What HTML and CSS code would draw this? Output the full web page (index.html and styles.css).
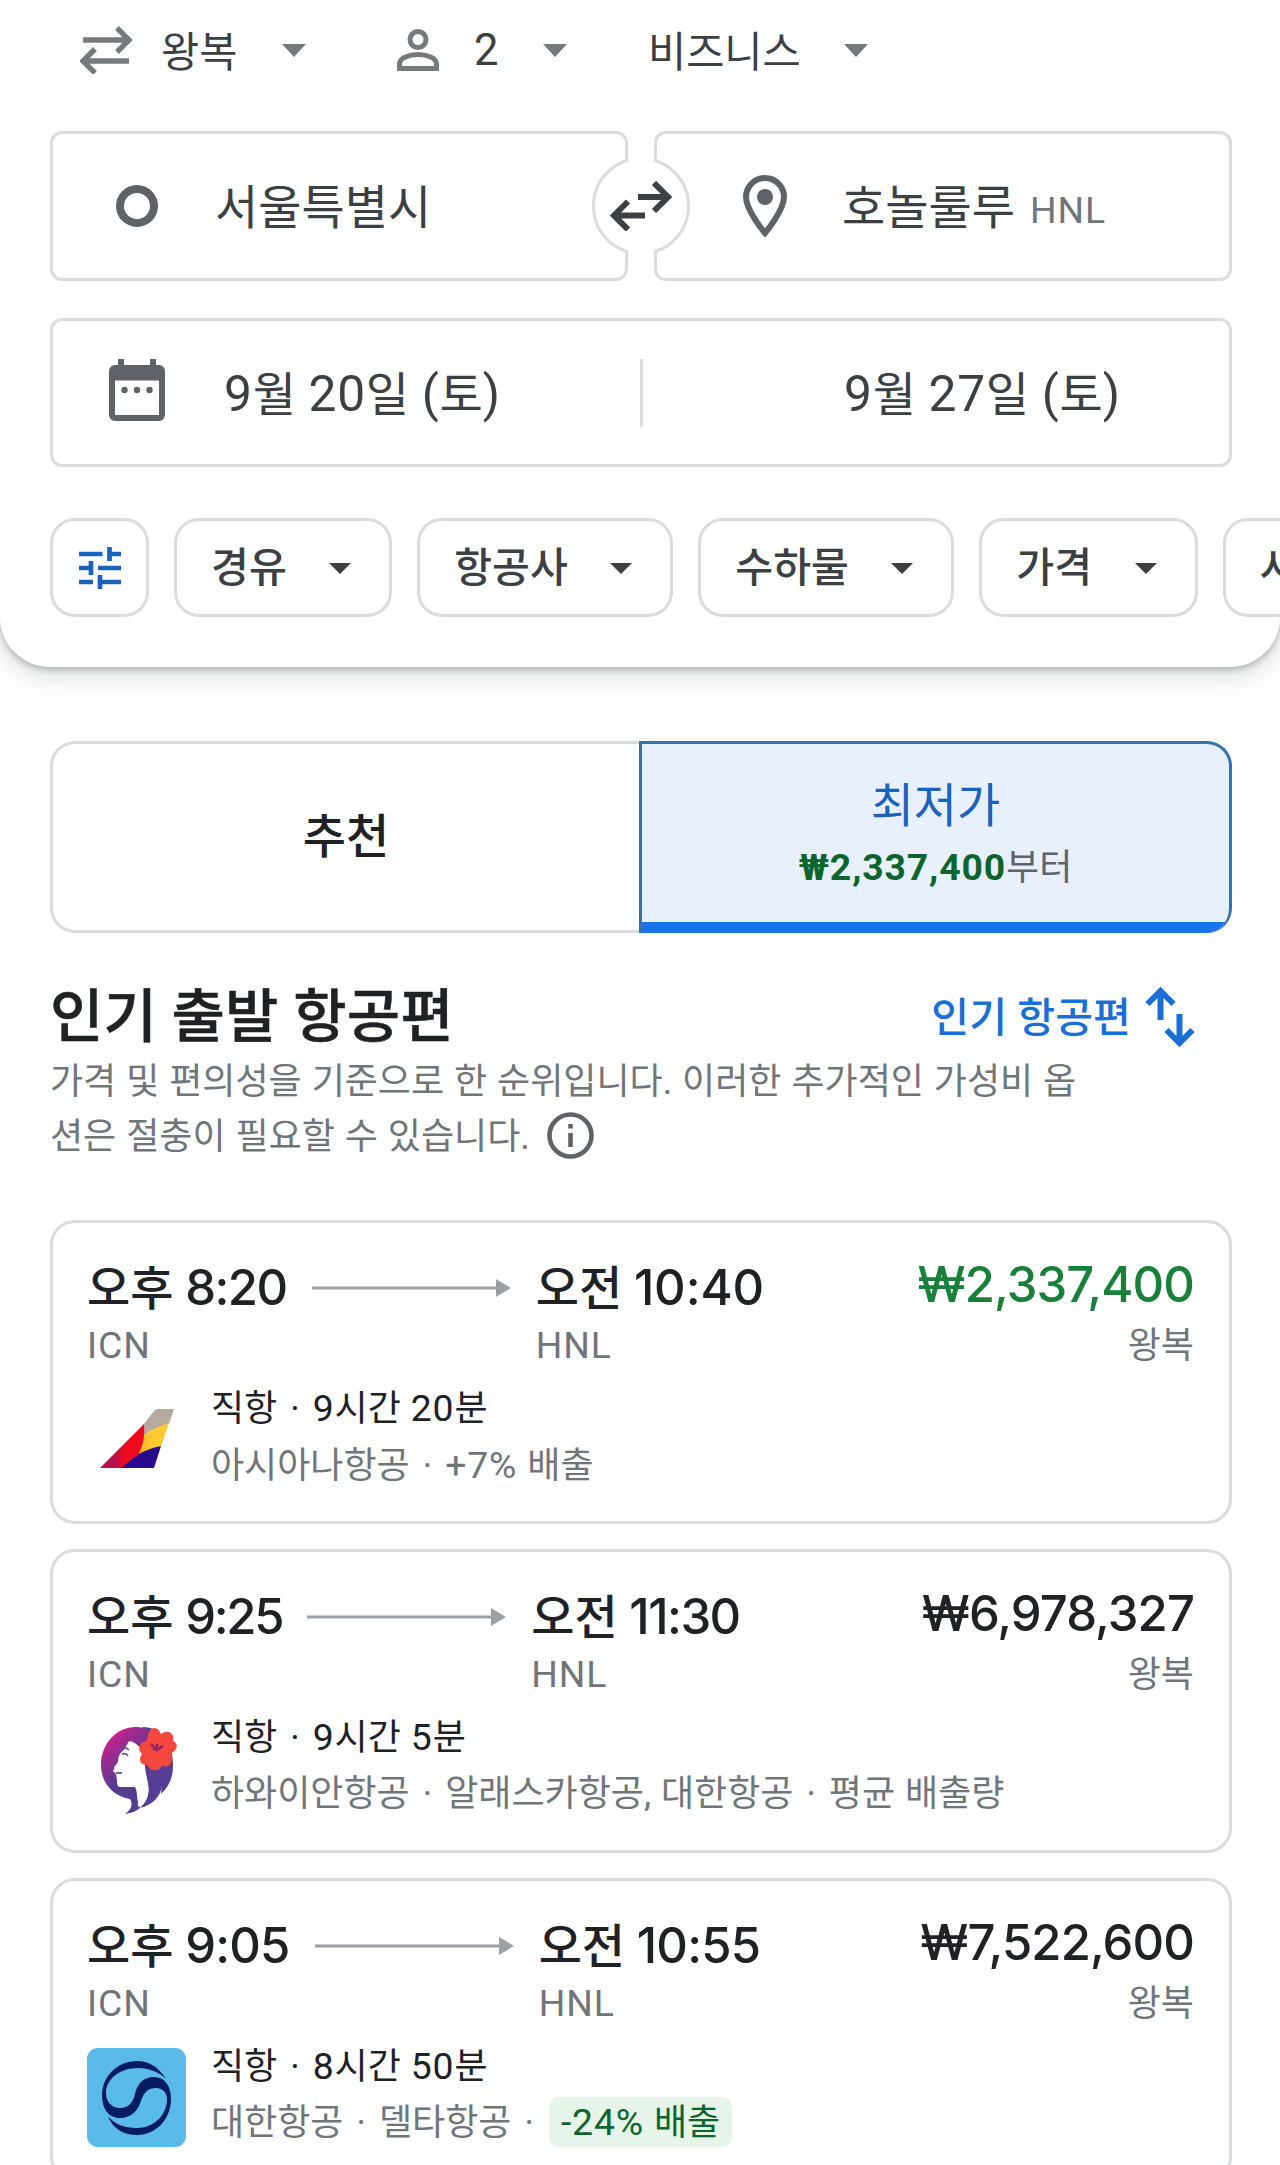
FILE: index.html
```html
<!DOCTYPE html>
<html lang="ko">
<head>
<meta charset="utf-8">
<title>항공편 검색</title>
<link rel="stylesheet" href="styles.css">
</head>
<body>
<header class="search">
  <div class="options">
    <div class="option option-trip">
      <svg class="i-trip" width="52" height="48" viewBox="0 0 52 48" fill="none" stroke="currentColor" stroke-width="5.4"><path d="M3 14H48M37 2l12 12-12 12M49 35H4M15 23L3 35l12 12"/></svg>
      <span>왕복</span><i class="caret"></i>
    </div>
    <div class="option option-people">
      <svg class="i-person" width="42" height="42" viewBox="0 0 42 42" fill="none" stroke="currentColor" stroke-width="5"><circle cx="21" cy="10.5" r="8"/><path d="M2.5 39.5V35C2.5 29 12 25.500 21 25.500S39.500 29 39.500 35v4.500z"/></svg>
      <span class="people">2</span><i class="caret"></i>
    </div>
    <div class="option option-class"><span>비즈니스</span><i class="caret"></i></div>
  </div>

  <div class="route">
    <div class="field">
      <svg class="i-origin" width="42" height="42" viewBox="0 0 42 42" fill="none" stroke="currentColor" stroke-width="8"><circle cx="21" cy="21" r="17"/></svg>
      <span>서울특별시</span>
    </div>
    <div class="field field-to">
      <svg class="i-pin" width="44" height="62" viewBox="0 0 44 62"><path d="M22 3C11.500 3 3 11.500 3 22c0 13.500 19 36 19 36s19-22.500 19-36C41 11.500 32.500 3 22 3z" fill="none" stroke="currentColor" stroke-width="6"/><circle cx="22" cy="22" r="8" fill="currentColor"/></svg>
      <span>호놀룰루</span><span class="code">HNL</span>
    </div>
    <div class="swap">
      <svg width="62" height="50" viewBox="0 0 62 50" fill="none" stroke="currentColor" stroke-width="6"><path d="M28 16H58M44 2l14 14-14 14M35 34.500H4M18 20.500l-14 14 14 14"/></svg>
    </div>
  </div>

  <div class="dates">
    <div class="date">
      <svg width="56" height="62" viewBox="0 0 56 62" fill="currentColor"><path fill-rule="evenodd" d="M9 0h6v6h26V0h6v6h3a6 6 0 0 1 6 6v44a6 6 0 0 1-6 6H6a6 6 0 0 1-6-6V12a6 6 0 0 1 6-6h3zM6 21.500V56h44V21.500z"/><circle cx="15.500" cy="31" r="3.200"/><circle cx="28" cy="31" r="3.200"/><circle cx="40.500" cy="31" r="3.200"/></svg>
      <span><b>9</b>월 <b>20</b>일 <b>(</b>토<b>)</b></span>
    </div>
    <div class="date date-back"><span><b>9</b>월 <b>27</b>일 <b>(</b>토<b>)</b></span></div>
  </div>

  <div class="chips">
    <div class="chip chip-tune"><svg width="42" height="42" viewBox="0 0 42 42" fill="none" stroke="currentColor" stroke-width="4.700"><path d="M0 7H23.500M30.500 0V14M30.500 7H42M0 21H12M12 14V28M19 21H42M0 35H14M21 28V42M21 35H42"/></svg></div>
    <div class="chip"><span>경유</span><i class="caret"></i></div>
    <div class="chip"><span>항공사</span><i class="caret"></i></div>
    <div class="chip"><span>수하물</span><i class="caret"></i></div>
    <div class="chip"><span>가격</span><i class="caret"></i></div>
    <div class="chip"><span>시간</span><i class="caret"></i></div>
  </div>
</header>

<main>
  <div class="tabs">
    <div class="tab">추천</div>
    <div class="tab tab-on"><span>최저가</span><small><strong>₩2,337,400</strong>부터</small></div>
  </div>

  <div class="heading">
    <h1>인기 출발 항공편</h1>
    <div class="sort"><span>인기 항공편</span>
      <svg width="50" height="62" viewBox="0 0 50 62" fill="none" stroke="currentColor" stroke-width="6"><path d="M15.500 34V5M2.500 18l13-13 13 13M34.500 28V57M21.500 44l13 13 13-13"/></svg>
    </div>
  </div>
  <p class="note">가격 및 편의성을 기준으로 한 순위입니다. 이러한 추가적인 가성비 옵<br>션은 절충이 필요할 수 있습니다.<svg width="47" height="47" viewBox="0 0 47 47"><circle cx="23.500" cy="23.500" r="21" fill="none" stroke="currentColor" stroke-width="4.600"/><path d="M21.200 21h4.600v14h-4.600zM21.200 12h4.600v4.600h-4.600z" fill="currentColor"/></svg></p>

  <section class="cards">
    <article class="card">
      <div class="times">
        <div class="stop"><span class="time">오후 <b>8:20</b></span><span class="code">ICN</span></div>
        <svg class="arrow" width="199" height="18" viewBox="0 0 199 18"><path d="M0 7.500H184V0l15 9-15 9v-7.500H0z"/></svg>
        <div class="stop"><span class="time">오전 <b class="wide">10:40</b></span><span class="code">HNL</span></div>
        <div class="fare"><span class="price low">₩2,337,400</span><span class="kind">왕복</span></div>
      </div>
      <div class="detail">
        <svg class="logo" width="99" height="99" viewBox="0 0 99 99">
          <defs><linearGradient id="az" x1="0" y1="0" x2="1" y2="0"><stop offset=".35" stop-color="#b5124d"/><stop offset=".55" stop-color="#ee0a1c"/></linearGradient>
          <linearGradient id="ay" x1="0" y1="0" x2="1" y2="0"><stop offset="0" stop-color="#f7a823"/><stop offset=".5" stop-color="#fecb2f"/></linearGradient></defs>
          <path fill="#b5aa9e" d="M70 19h17l-5 15C71 36 63 41 56 46V35L67 21z"/>
          <path fill="url(#ay)" d="M56 46C63 41 71 36 82 33l-8 23C63 58 55 63 48 69z"/>
          <path fill="#2a0a8c" d="M74 56l-7 22H32C44 67 58 59 74 56z"/>
          <path fill="url(#az)" d="M13 78L57 34c1 12-1 22-6 31-7 4-12 9-16 13z"/>
        </svg>
        <div class="lines"><span class="dark">직항 <i>·</i> <b>9</b>시간 <b>20</b>분</span><span>아시아나항공 <i>·</i> <b>+7%</b> 배출</span></div>
      </div>
    </article>

    <article class="card">
      <div class="times">
        <div class="stop"><span class="time">오후 <b class="tight">9:25</b></span><span class="code">ICN</span></div>
        <svg class="arrow" width="199" height="18" viewBox="0 0 199 18"><path d="M0 7.500H184V0l15 9-15 9v-7.500H0z"/></svg>
        <div class="stop"><span class="time">오전 <b>11:30</b></span><span class="code">HNL</span></div>
        <div class="fare"><span class="price">₩6,978,327</span><span class="kind">왕복</span></div>
      </div>
      <div class="detail">
        <svg class="logo" width="99" height="99" viewBox="0 0 99 99">
          <defs><linearGradient id="hw" x1=".1" y1=".1" x2=".45" y2=".75"><stop offset="0" stop-color="#dc1f8d"/><stop offset=".3" stop-color="#a12a8e"/><stop offset=".8" stop-color="#553c94"/></linearGradient></defs>
          <path fill="#553c94" d="M56 8c16 0 30 15 30 37 0 12-2 20-12 30l1-9c-1 12-10 20-22 23 8-7 10-15 7-27L56 41 42 22z"/>
          <path fill="url(#hw)" d="M64 13C58 9 54 8 49 8 29 8 14 25 14 46c0 17 11 31 29 34 3 5 2 10-5 15 7-1 12-3 15-6-3-8-3-14-4-21H33c-3 0-3-4-3-7l-1-6-3-3 5-9c0-6 2-9 6-12l5-9 6 2c4 1 6 5 8 9z"/>
          <path fill="#fff" d="M43 22c-1 5-4 7-6 9-4 4-5 7-5 11l-5 6 3 3-1 3 2 2-1 5c1 5 3 5 7 5 5 0 9 0 11 2 3 5 3 12 3 20 9-6 12-13 10-23-1-8-4-15-3-24-2-10-7-17-15-19z"/>
          <path fill="none" stroke="#6a4a9c" stroke-width="1.600" d="M33 30c4-2 7-1 9 1M35 35c3-1 5 0 6 2"/>
          <path fill="none" stroke="#8b5aa5" stroke-width="2" d="M29 54h6"/>
          <path fill="#f4473d" d="M63 11c4-4 9-2 11 4 7-5 14-1 12 7 5 2 5 8 0 11-1 0-1 1-2 2 3 8-1 14-9 12-4 7-12 5-15-1-7 0-9-6-5-11-5-4-3-12 4-13 2-3 2-7 4-11z"/>
          <path fill="none" stroke="#8d2767" stroke-width="2.400" d="M64 25l6 6 6-4M70 31l-4-1m4 1v-6"/>
        </svg>
        <div class="lines"><span class="dark">직항 <i>·</i> <b>9</b>시간 <b>5</b>분</span><span>하와이안항공 <i>·</i> 알래스카항공, 대한항공 <i>·</i> 평균 배출량</span></div>
      </div>
    </article>

    <article class="card">
      <div class="times">
        <div class="stop"><span class="time">오후 <b class="loose">9:05</b></span><span class="code">ICN</span></div>
        <svg class="arrow" width="199" height="18" viewBox="0 0 199 18"><path d="M0 7.500H184V0l15 9-15 9v-7.500H0z"/></svg>
        <div class="stop"><span class="time">오전 <b class="loose">10:55</b></span><span class="code">HNL</span></div>
        <div class="fare"><span class="price">₩7,522,600</span><span class="kind">왕복</span></div>
      </div>
      <div class="detail">
        <svg class="logo" width="99" height="99" viewBox="0 0 99 99">
          <rect width="99" height="99" rx="11" fill="#5abbea"/>
          <path fill="#051b66" d="M79 31C71 18 61 13 50 13 30 13 15 29 15 47c0 13 6 23 18 23s18-8 21-17c3-9 7-13 15-13 7 0 11 5 11 11 0 16-13 29-30 29-13 0-23-4-29-12 4 12 15 19 29 19 20 0 34-17 34-36 0-13-6-22-17-22-12 0-17 8-19 17-2 8-6 14-15 14s-14-7-14-15c0-14 14-25 32-25 11 0 21 4 28 11z"/>
        </svg>
        <div class="lines"><span class="dark">직항 <i>·</i> <b>8</b>시간 <b>50</b>분</span><span>대한항공 <i>·</i> 델타항공 <i>·</i> <em><b>-24%</b> 배출</em></span></div>
      </div>
    </article>
  </section>
</main>
</body>
</html>
```
FILE: styles.css
```css
* { box-sizing: border-box; }
body {
  margin: 0;
  height: 2165px;
  overflow: hidden;
  background: #fff;
  color: #202124;
  font-family: Roboto, "Noto Sans CJK KR", sans-serif;
}
svg { display: block; flex: none; }
b { font-weight: inherit; }
i { font-style: normal; }

.search {
  height: 667px;
  padding: 0 48px 0 50px;
  overflow: hidden;
  background: #fff;
  border-radius: 0 0 50px 50px;
  box-shadow: 0 3px 6px rgba(60, 64, 67, .3), 0 8px 22px 4px rgba(60, 64, 67, .14);
  color: #3c4043;
}

.options { display: flex; height: 131px; padding: 0 0 31px 30px; font-size: 41.500px; }
.option { display: flex; align-items: center; }
.option span { padding-bottom: 3px; }
.option svg { color: #757a7d; }
.option .caret { color: #757a7d; border-width: 13px 12.500px 0; }
.option-trip { width: 317px; }
.option-trip span { margin: 0 45px 0 29px; }
.option-people { width: 251px; }
.option .people { margin: 0 45px 0 35px; padding: 0; font-size: 43.500px; }
.option-class span { margin-right: 43px; }
.caret { border: solid transparent; border-width: 11px 11.500px 0; border-top-color: currentColor; }

.route { position: relative; display: flex; gap: 26px; }
.field {
  display: flex;
  align-items: center;
  width: 578px;
  height: 150px;
  padding-left: 63px;
  border: 3px solid #dadce0;
  border-radius: 12px;
  font-size: 47px;
}
.field svg, .date svg { color: #5f6368; }
.field span { margin: 0 0 5px 57px; }
.field-to { padding-left: 86px; }
.field-to span { margin-left: 55px; }
.field-to .code { margin: 8px 0 0 15px; }
.code { color: #70757a; font-size: 37.300px; letter-spacing: .900px; }
.swap {
  position: absolute;
  left: 542px;
  top: 26px;
  display: flex;
  align-items: center;
  justify-content: center;
  width: 98px;
  height: 98px;
  border: 3px solid #dadce0;
  border-radius: 50%;
  background: #fff;
}
.swap::before { content: ""; position: absolute; left: 33px; top: -4px; width: 26px; height: 100px; background: #fff; }
.swap svg { position: relative; }

.dates {
  display: flex;
  height: 149px;
  margin-top: 37px;
  border: 3px solid #dadce0;
  border-radius: 12px;
  font-size: 47px;
}
.date { display: flex; align-items: center; flex: 0 0 50%; padding: 0 0 5px 56px; }
.date span { margin-left: 59px; word-spacing: 1px; }
.date b { font-size: 49.700px; letter-spacing: .700px; }
.date-back { position: relative; padding-left: 144px; }
.date-back::before { content: ""; position: absolute; left: -1px; top: 38px; width: 3px; height: 68px; background: #dadce0; }

.chips { display: flex; gap: 25px; width: 1400px; margin-top: 51px; }
.chip {
  display: flex;
  align-items: center;
  height: 99px;
  padding: 0 38px 3px 34px;
  border: 3px solid #dadce0;
  border-radius: 25px;
  font-size: 41.200px;
  font-weight: 500;
}
.chip span { padding-bottom: 4px; }
.chip .caret { margin: 5px 0 0 42.400px; }
.chip-tune { justify-content: center; width: 99px; padding: 0; color: #1a63bc; }

main { padding: 74px 48px 0 50px; }
.tabs { display: flex; height: 192px; }
.tab {
  display: flex;
  flex: 0 0 589px;
  flex-direction: column;
  align-items: center;
  justify-content: center;
  border: 3px solid #dadce0;
  border-right: 0;
  border-radius: 25px 0 0 25px;
  font-size: 47px;
  font-weight: 500;
  line-height: 62px;
}
.tab-on {
  position: relative;
  flex: 1;
  justify-content: flex-start;
  padding-top: 31px;
  overflow: hidden;
  border: 3px solid #3374ab;
  border-bottom: 0;
  border-radius: 0 25px 25px 0;
  background: #e8f0fe;
  color: #1a63bc;
  font-weight: 400;
}
.tab-on::after { content: ""; position: absolute; left: -3px; right: -3px; bottom: 0; height: 11px; background: #1a73e8; }
.tab small { margin-top: -1px; color: #5f6368; font-size: 36px; }
.tab strong { color: #0d652d; font-size: 37.300px; font-weight: 700; letter-spacing: .900px; }

.heading { display: flex; align-items: center; justify-content: space-between; height: 84px; margin-top: 42px; padding-right: 37px; }
h1 { margin: 0; padding-bottom: 10px; font-size: 58px; font-weight: 500; letter-spacing: .150px; -webkit-text-stroke: .5px currentColor; }
.sort { display: flex; align-items: center; gap: 14px; color: #1a6fd6; font-size: 41.200px; font-weight: 500; }
.sort span { padding-bottom: 7px; }
.note { height: 110px; margin: -4px 0 0; color: #70757a; font-size: 36px; line-height: 55px; white-space: nowrap; word-spacing: 1px; }
.note svg { display: inline-block; margin-left: 17px; vertical-align: -10px; color: #5f6368; }

.cards { display: grid; gap: 25px; margin-top: 55px; }
.card { height: 304px; padding: 35px 34px 0; border: 3px solid #dadce0; border-radius: 25px; }
.times { display: flex; height: 132px; }
.stop, .fare { display: flex; flex-direction: column; }
.time { font-size: 47px; font-weight: 500; line-height: 60px; white-space: nowrap; }
.time b, .price { font-family: Inter, "Noto Sans CJK KR", sans-serif; font-size: 49px; letter-spacing: -1.500px; }
.time .wide { letter-spacing: -.100px; }
.time .loose { letter-spacing: -.800px; }
.time .tight { letter-spacing: -2.300px; }
.stop .code { line-height: 53px; }
.arrow { margin: 21px 25px 0; fill: #9aa0a6; }
.fare { margin-left: auto; align-items: flex-end; }
.fare .price { margin-right: 1px; font-weight: 500; letter-spacing: -.900px; line-height: 54px; }
.low { color: #188038; }
.kind { margin-right: 1px; color: #70757a; font-size: 36px; line-height: 69px; }
.detail { display: flex; gap: 25px; }
.lines { display: flex; flex-direction: column; color: #70757a; font-size: 36px; line-height: 56px; word-spacing: 1px; white-space: nowrap; }
.lines > span { height: 57px; }
.lines b { font-size: 37.300px; letter-spacing: .900px; }
.lines i { margin: 0 3.100px; }
.lines .dark { color: #202124; margin-top: -10px; }
em { display: inline-block; height: 50px; margin-left: 2px; padding: 0 12px; border-radius: 10px; background: #e6f4ea; color: #0d652d; font-style: normal; line-height: 50px; }
```
